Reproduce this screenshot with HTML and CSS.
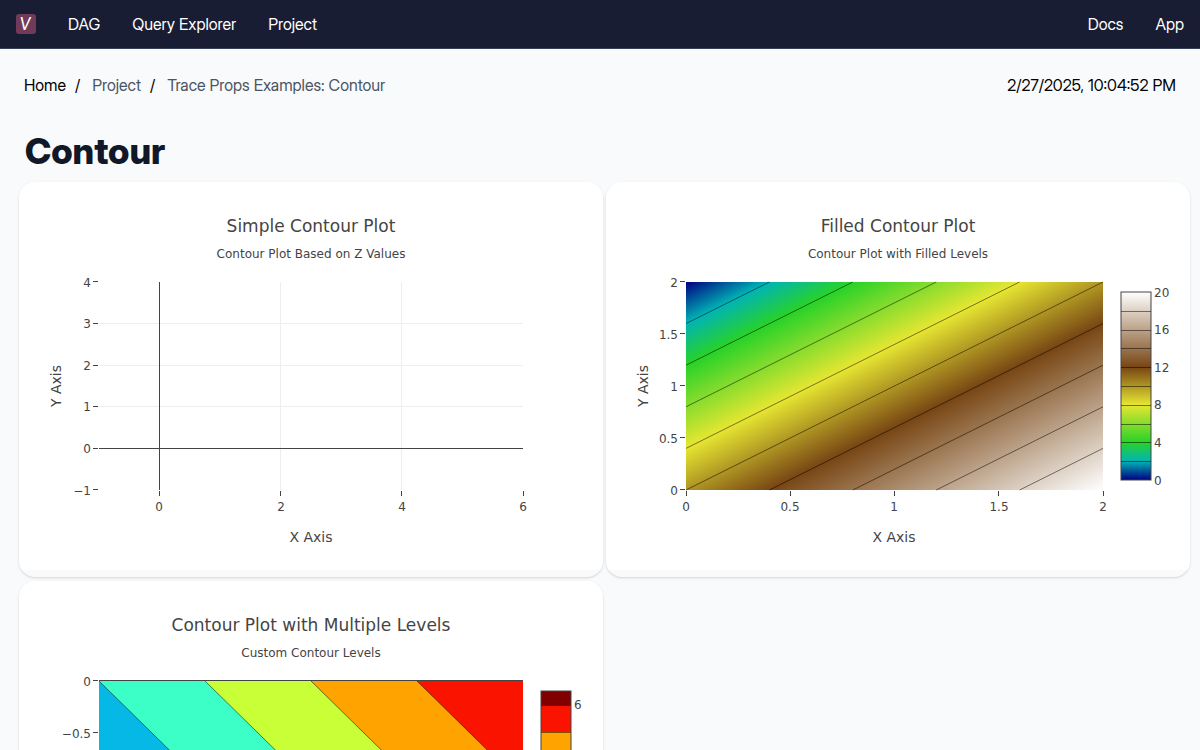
FILE: index.html
```html
<!DOCTYPE html>
<html lang="en">
<head>
<meta charset="utf-8">
<title>Contour</title>
<link rel="stylesheet" href="styles.css">
</head>
<body>
<nav class="topbar">
  <div class="topbar-group">
    <a class="logo" href="#" aria-label="Start page">
      <svg viewBox="0 0 20 20" width="20" height="20"><rect width="20" height="20" rx="3" fill="#713b57"/><text class="logo-mark" x="9" y="16" text-anchor="middle">V</text></svg>
    </a>
    <a href="#">DAG</a>
    <a href="#">Query Explorer</a>
    <a href="#">Project</a>
  </div>
  <div class="topbar-group">
    <a href="#">Docs</a>
    <a href="#">App</a>
  </div>
</nav>
<header class="subbar">
  <ol class="crumbs">
    <li><a class="crumb-home" href="#">Home</a></li>
    <li><a href="#">Project</a></li>
    <li><a href="#">Trace Props Examples: Contour</a></li>
  </ol>
  <time>2/27/2025, 10:04:52 PM</time>
</header>
<main>
  <h1>Contour</h1>
  <div class="grid">
    <section class="card">
      <svg class="chart" viewBox="0 0 584 388">
        <text class="title" x="292" y="50">Simple Contour Plot</text>
        <text class="subtitle" x="292" y="76">Contour Plot Based on Z Values</text>
        <path class="gridline" d="M80 141.500H504M80 183.500H504M80 224.500H504M261.500 100V308M382.500 100V308"/>
        <path class="axis" d="M80 266.500H504M140.500 100V308"/>
        <path class="axis" d="M74 99.500h5M74 141.500h5M74 183.500h5M74 224.500h5M74 266.500h5M74 307.500h5M140.500 309v5M261.500 309v5M382.500 309v5M504.500 309v5"/>
        <g class="ylabels"><text x="72" y="105">4</text><text x="72" y="146">3</text><text x="72" y="188">2</text><text x="72" y="229">1</text><text x="72" y="271">0</text><text x="72" y="313">−1</text></g>
        <g class="xlabels"><text x="140" y="329">0</text><text x="262" y="329">2</text><text x="383" y="329">4</text><text x="504" y="329">6</text></g>
        <text class="axis-title" x="292" y="360">X Axis</text>
        <text class="axis-title" transform="translate(42 204) rotate(-90)">Y Axis</text>
      </svg>
    </section>
    <section class="card">
      <svg class="chart" viewBox="0 0 584 388">
        <defs>
          <linearGradient id="earth" x1="0" y1="0" x2="1" y2="1">
            <stop offset="0" stop-color="#000082"/><stop offset="0.1" stop-color="#00b4b4"/><stop offset="0.2" stop-color="#28d228"/><stop offset="0.4" stop-color="#e6e632"/><stop offset="0.6" stop-color="#784614"/><stop offset="1" stop-color="#ffffff"/>
          </linearGradient>
          <linearGradient id="earth-bar" href="#earth" x1="0" y1="1" x2="0" y2="0"/>
        </defs>
        <text class="title" x="292" y="50">Filled Contour Plot</text>
        <text class="subtitle" x="292" y="76">Contour Plot with Filled Levels</text>
        <rect x="80" y="100" width="417" height="208" fill="url(#earth)"/>
        <path class="contour" d="M80 141.600L163.400 100M80 183.200L246.800 100M80 224.800L330.200 100M80 266.400L413.600 100M80 308L497 100M163.400 308L497 141.600M246.800 308L497 183.200M330.200 308L497 224.800M413.600 308L497 266.400"/>
        <path class="axis" d="M74 99.500h5M74 151.500h5M74 203.500h5M74 255.500h5M74 307.500h5M80.500 309v5M184.500 309v5M288.500 309v5M392.500 309v5M497.500 309v5"/>
        <g class="ylabels"><text x="72" y="105">2</text><text x="72" y="157">1.5</text><text x="72" y="209">1</text><text x="72" y="261">0.5</text><text x="72" y="313">0</text></g>
        <g class="xlabels"><text x="80" y="329">0</text><text x="184" y="329">0.5</text><text x="288" y="329">1</text><text x="393" y="329">1.5</text><text x="497" y="329">2</text></g>
        <text class="axis-title" x="288" y="360">X Axis</text>
        <text class="axis-title" transform="translate(42 204) rotate(-90)">Y Axis</text>
        <rect class="bar-frame" x="515" y="110" width="30" height="188" fill="url(#earth-bar)"/>
        <path class="bar-level" d="M515 129.500h30M515 148.500h30M515 166.500h30M515 185.500h30M515 204.500h30M515 223.500h30M515 242.500h30M515 260.500h30M515 279.500h30"/>
        <g class="barlabels"><text x="548" y="115">20</text><text x="548" y="152">16</text><text x="548" y="190">12</text><text x="548" y="227">8</text><text x="548" y="265">4</text><text x="548" y="303">0</text></g>
      </svg>
    </section>
    <section class="card">
      <svg class="chart" viewBox="0 0 584 388">
        <text class="title" x="292" y="50">Contour Plot with Multiple Levels</text>
        <text class="subtitle" x="292" y="76">Custom Contour Levels</text>
        <rect x="80" y="100" width="424" height="208" fill="#05b8e5"/>
        <path fill="#3cffc8" d="M80 100H504V308H292Z"/>
        <path fill="#c8ff37" d="M186 100H504V308H398Z"/>
        <path fill="#ffa300" d="M292 100H504V308Z"/>
        <path fill="#fa1400" d="M398 100H504V204Z"/>
        <path class="contour" d="M80 100L292 308M186 100L398 308M292 100L504 308M398 100L504 204"/>
        <path class="axis" d="M80 99.500H504M74 99.500h5M74 151.500h5M74 203.500h5M74 255.500h5M74 307.500h5"/>
        <g class="ylabels"><text x="72" y="105">0</text><text x="72" y="157">−0.5</text></g>
        <rect x="522" y="110" width="30" height="14" fill="#800000"/>
        <rect x="522" y="124" width="30" height="27" fill="#fa1400"/>
        <rect x="522" y="151" width="30" height="27" fill="#ffa300"/>
        <rect x="522" y="178" width="30" height="27" fill="#c8ff37"/>
        <rect x="522" y="205" width="30" height="27" fill="#3cffc8"/>
        <rect x="522" y="232" width="30" height="66" fill="#05b8e5"/>
        <path class="bar-level" d="M522 124.500h30M522 151.500h30M522 178.500h30M522 205.500h30M522 232.500h30"/>
        <rect class="bar-frame" x="522" y="110" width="30" height="188" fill="none"/>
        <g class="barlabels"><text x="555" y="128">6</text></g>
      </svg>
    </section>
  </div>
</main>
</body>
</html>
```
FILE: styles.css
```css
* { box-sizing: border-box; }
body {
  margin: 0;
  background: #f9fafc;
  color: #000;
  font: 16px/24px "Inter Display", Inter, sans-serif;
}
a { color: inherit; text-decoration: none; }
.topbar {
  display: flex;
  align-items: center;
  justify-content: space-between;
  height: 49px;
  padding: 0 16px;
  background: #191d33;
  border-bottom: 1px solid #374057;
  color: #fff;
}
.topbar-group { display: flex; align-items: center; gap: 32px; }
.logo { display: flex; }
.logo-mark { font: italic 400 17px Lato, sans-serif; fill: #fff; }
.subbar {
  display: flex;
  justify-content: space-between;
  padding: 24px 24px 0;
}
.crumbs { display: flex; gap: 9px; margin: 0; padding: 0; list-style: none; color: #4b5563; }
.crumb-home { color: #000; }
.crumbs li + li::before { content: "/"; margin-right: 12px; color: #000; }
h1 {
  margin: 34px 0 11px;
  padding-left: 6px;
  color: #111827;
  font-size: 36px;
  line-height: 40px;
  font-weight: 800;
}
main { padding: 0 10px 16px 19px; }
.grid { display: grid; grid-template-columns: 1fr 1fr; gap: 4px 3px; }
.card {
  padding-bottom: 7px;
  overflow: hidden;
  border-radius: 16px;
  background: #f9fafb;
  box-shadow: 0 1px 3px rgba(0, 0, 0, 0.1), 0 1px 2px rgba(0, 0, 0, 0.06);
}
.chart { display: block; width: 100%; height: auto; background: #fff; font-family: "DejaVu Sans", sans-serif; fill: #444; }
.title { font-size: 17px; text-anchor: middle; }
.subtitle { font-size: 12px; text-anchor: middle; }
.axis-title { font-size: 14px; text-anchor: middle; }
.xlabels, .ylabels, .barlabels { font-size: 12px; }
.xlabels { text-anchor: middle; }
.ylabels { text-anchor: end; }
.gridline { stroke: #eee; }
.axis { stroke: #444; fill: none; }
.contour { stroke: #000; stroke-opacity: 0.5; fill: none; }
.bar-level { stroke: #000; stroke-opacity: 0.5; }
.bar-frame { stroke: #444; }
```
